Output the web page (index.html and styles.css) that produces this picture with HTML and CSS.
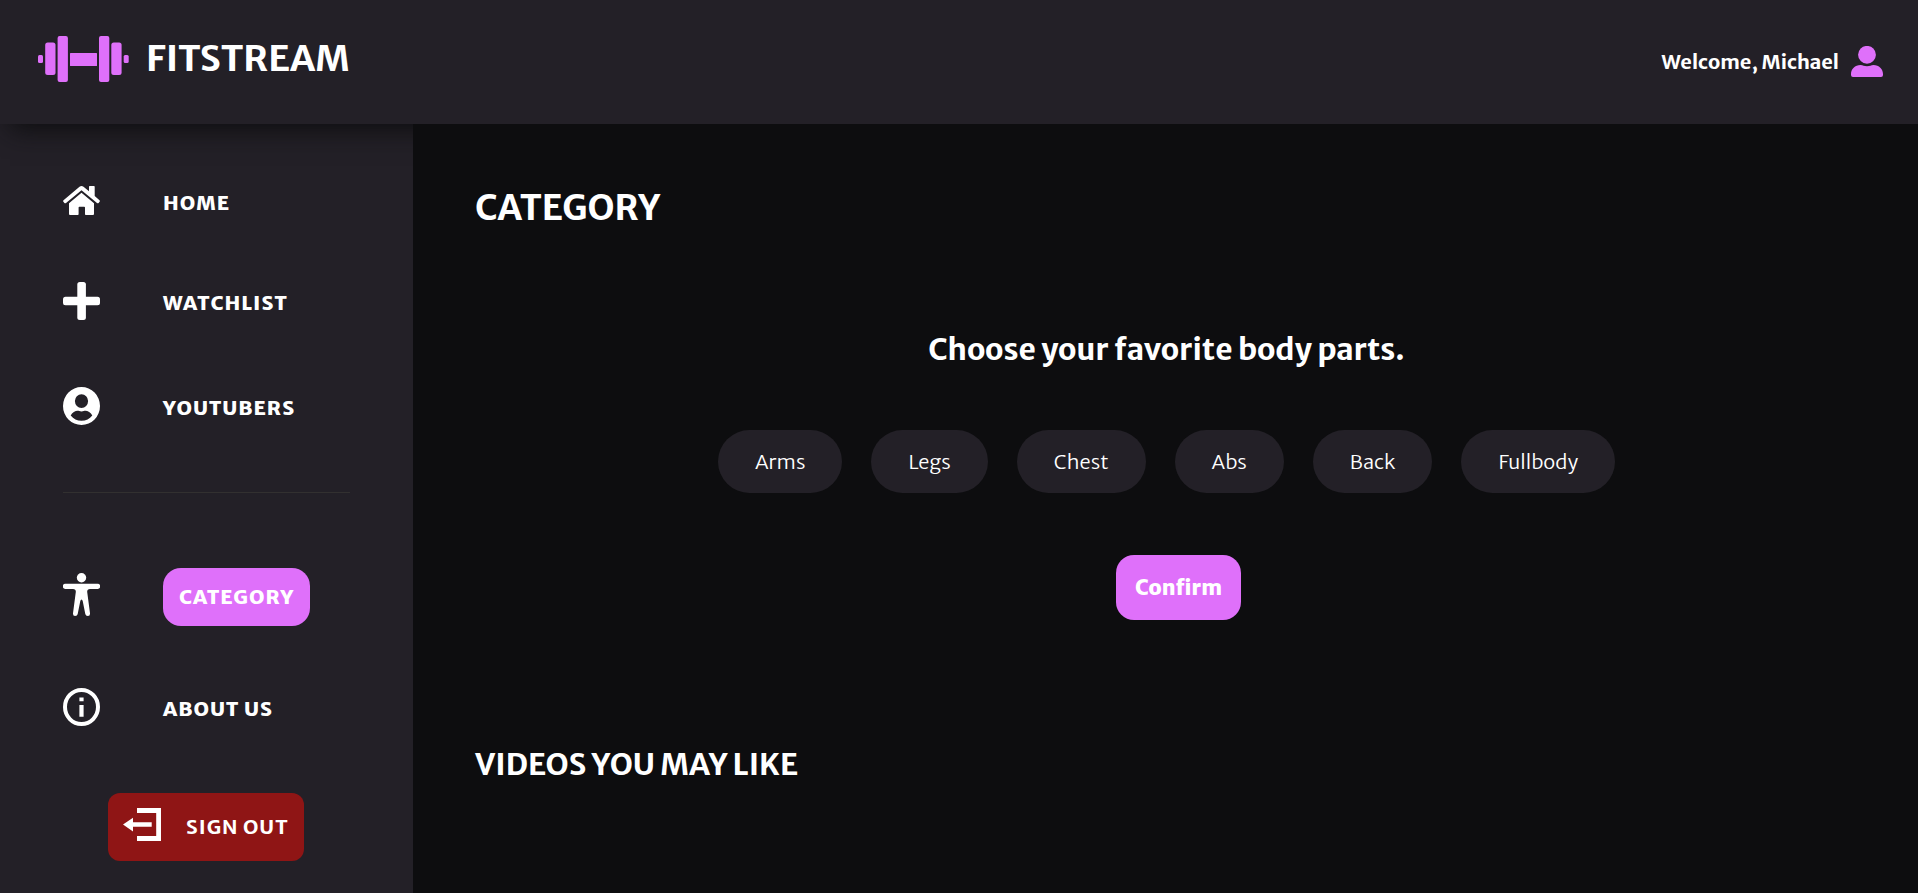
FILE: index.html
```html
<!DOCTYPE html>
<html lang="en">
<head>
<meta charset="utf-8">
<meta name="viewport" content="width=device-width, initial-scale=1">
<title>Fitstream</title>
<link rel="stylesheet" href="styles.css">
</head>
<body>
<header class="header">
  <a class="brand" href="#">
    <svg class="brand-icon" width="91" height="46" viewBox="0 0 91 46" aria-hidden="true">
      <rect x="0" y="19" width="5" height="8" rx="1.5"/>
      <rect x="7.2" y="6.5" width="10.3" height="32.5" rx="2.5"/>
      <rect x="19.6" y="0" width="10.3" height="46" rx="2"/>
      <rect x="32" y="17" width="27" height="13" rx=".5"/>
      <rect x="61" y="0" width="10.3" height="46" rx="2"/>
      <rect x="73.3" y="6.5" width="10.3" height="32.5" rx="2.5"/>
      <rect x="85.7" y="19" width="5" height="8" rx="1.5"/>
    </svg>
    <span class="brand-name">FITSTREAM</span>
  </a>
  <div class="welcome">
    <span>Welcome, Michael</span>
    <svg class="user-icon" width="32" height="31" viewBox="0 0 32 31" aria-hidden="true">
      <circle cx="16" cy="8.8" r="8.9"/>
      <path d="M9.5 19C12 19 13 20.3 16 20.3S20 19 22.500 19C28 19 32 23 32 28V29Q32 31 30 31H2Q0 31 0 29V28C0 23 4 19 9.500 19Z"/>
    </svg>
  </div>
</header>
<div class="layout">
  <nav class="sidebar" aria-label="Main">
    <ul class="menu">
      <li><a class="menu-link" href="#">
        <svg width="37" height="29" viewBox="0 0 37 29" aria-hidden="true">
          <path d="M.5 14.200 16.500.700Q18.500-.700 20.500.700L26 5.300V.700Q26 0 26.700 0H31Q31.700 0 31.700.700V10L36.500 14.200Q37.300 15 36.600 15.800L35.600 17Q34.800 17.700 34 17L18.500 4.200 3 17Q2.200 17.700 1.400 17L.4 15.800Q-.3 15 .5 14.200Z"/>
          <path d="M18.500 6.800 31 17.200V28Q31 29 30 29H22.800Q22 29 22 28.200V21.500Q22 20.700 21.200 20.700H16.400Q15.600 20.700 15.600 21.500V28.200Q15.600 29 14.800 29H7Q6 29 6 28V17.200Z"/>
        </svg>
        <span class="label">HOME</span></a></li>
      <li><a class="menu-link" href="#">
        <svg width="37" height="38" viewBox="0 0 37 38" aria-hidden="true">
          <rect x="14.300" y="0" width="8.600" height="38" rx="2.500"/>
          <rect x="0" y="14.800" width="37" height="8.400" rx="2.500"/>
        </svg>
        <span class="label">WATCHLIST</span></a></li>
      <li><a class="menu-link" href="#">
        <svg width="37" height="38" viewBox="0 0 37 38" aria-hidden="true">
          <path fill-rule="evenodd" d="M18.500 0A18.500 19 0 0 1 18.500 38A18.500 19 0 0 1 18.500 0ZM18.500 7.300A6.600 6.800 0 0 0 18.500 20.900A6.600 6.800 0 0 0 18.500 7.300ZM7.700 28.500C10.500 32 14 33.700 18.500 33.700S26.500 32 29.300 28.500C28 25.500 24.500 23.700 22.500 23.700C21 23.700 20.500 24.400 18.500 24.400S16 23.700 14.500 23.700C12.500 23.700 9 25.500 7.700 28.500Z"/>
        </svg>
        <span class="label">YOUTUBERS</span></a></li>
    </ul>
    <hr class="divider">
    <ul class="menu menu-secondary">
      <li><a class="menu-link" href="#" aria-current="page">
        <svg class="raised" width="37" height="43" viewBox="0 0 37 43" aria-hidden="true">
          <circle cx="18.500" cy="4.700" r="4.700"/>
          <path d="M2.400 10.800H34.600A2.500 2.500 0 0 1 34.600 15.900H27Q24 15.900 24.200 19L27 40.300Q27.200 43 24.900 43T22.300 41L19.700 28Q19.300 26.500 18.500 26.500T17.300 28L14.700 41Q14.400 43 12.100 43T10 40.300L12.800 19Q13 15.900 10 15.900H2.400A2.500 2.500 0 0 1 2.400 10.800Z"/>
        </svg>
        <span class="pill">CATEGORY</span></a></li>
      <li><a class="menu-link" href="#">
        <svg width="37" height="38" viewBox="0 0 37 38" aria-hidden="true">
          <ellipse class="ring" cx="18.500" cy="19" rx="16.500" ry="17"/>
          <path d="M16.400 9.500H20.600V13.300H16.400ZM16.400 17H20.600V28.700H16.400Z"/>
        </svg>
        <span class="label">ABOUT US</span></a></li>
    </ul>
    <button class="sign-out" type="button">
      <svg class="raised" width="38" height="33" viewBox="0 0 38 33" aria-hidden="true">
        <path d="M14 0H38V33H14V28H33.200V5H14ZM0 16.600 10 9.700V14.300H28.700V18.800H10V23.500Z"/>
      </svg>
      <span>SIGN OUT</span>
    </button>
  </nav>
  <main class="content">
    <h1 class="title">CATEGORY</h1>
    <section class="chooser">
      <h2 class="prompt">Choose your favorite body parts.</h2>
      <div class="options">
        <button class="option" type="button">Arms</button>
        <button class="option" type="button">Legs</button>
        <button class="option" type="button">Chest</button>
        <button class="option" type="button">Abs</button>
        <button class="option" type="button">Back</button>
        <button class="option" type="button">Fullbody</button>
      </div>
      <button class="confirm" type="button">Confirm</button>
    </section>
    <h2 class="subtitle">VIDEOS YOU MAY LIKE</h2>
  </main>
</div>
</body>
</html>
```
FILE: styles.css
```css
* {
  box-sizing: border-box;
}

body {
  margin: 0;
  min-height: 100vh;
  display: flex;
  flex-direction: column;
  background: #0d0d0f;
  color: #fff;
  font-family: "Merriweather Sans", Lato, "Open Sans", sans-serif;
  font-size: 20px;
  line-height: 24px;
}

a {
  color: inherit;
  text-decoration: none;
}

button {
  border: 0;
  color: inherit;
  font: inherit;
  cursor: pointer;
}

svg {
  flex: none;
  fill: currentColor;
}

h1,
h2 {
  margin: 0;
}

.header {
  position: relative;
  z-index: 1;
  display: flex;
  justify-content: space-between;
  padding: 34px 35px 40px 38px;
  background: #232027;
  box-shadow: 10px 5px 25px #0d0d0f;
}

.brand {
  display: flex;
  align-items: center;
  gap: 17px;
  height: 50px;
}

.brand-icon,
.user-icon {
  color: #df70fa;
}

.brand-name {
  font-size: 36px;
  line-height: 50px;
  font-weight: 700;
}

.welcome {
  display: flex;
  align-items: center;
  gap: 12px;
  padding-top: 5px;
  font-weight: 600;
}

.layout {
  flex: 1;
  display: flex;
}

.sidebar {
  flex: none;
  width: 413px;
  padding: 62px 63px 32px;
  background: #232027;
}

.menu {
  display: flex;
  flex-direction: column;
  gap: 67px;
  margin: 0;
  padding: 0;
  list-style: none;
}

.menu-secondary {
  gap: 62px;
}

.menu-link {
  display: flex;
  align-items: center;
  gap: 63px;
  font-weight: 800;
  letter-spacing: 1px;
}

.label {
  padding-top: 4px;
}

.raised {
  margin-bottom: 5px;
}

.pill {
  padding: 17px 16px;
  border-radius: 18px;
  background: #df70fa;
}

.divider {
  height: 1px;
  margin: 67px 0 75px;
  border: 0;
  background: #323030;
}

.ring {
  fill: none;
  stroke: currentColor;
  stroke-width: 4;
}

.sign-out {
  display: flex;
  align-items: center;
  gap: 25px;
  height: 68px;
  margin: 67px 0 0 45px;
  padding: 0 15px;
  border-radius: 12px;
  background: #8f1515;
  font-weight: 700;
  letter-spacing: 1px;
}

.content {
  position: relative;
  z-index: 2;
  flex: 1;
  padding: 59px 60px 59px 62px;
  background: #0d0d0f;
}

.title {
  font-size: 35px;
  line-height: 50px;
}

.chooser {
  display: flex;
  flex-direction: column;
  align-items: center;
  padding: 96px 0 124px;
}

.prompt {
  font-size: 30px;
  font-weight: 600;
  line-height: 40px;
}

.options {
  display: flex;
  flex-wrap: wrap;
  justify-content: center;
  gap: 29px;
  margin: 61px 0 62px;
}

.option {
  height: 63px;
  padding: 0 37px;
  border-radius: 32px;
  background: #232027;
  font-weight: 300;
}

.confirm {
  height: 65px;
  margin-left: 24px;
  padding: 0 19px;
  border-radius: 18px;
  background: #df70fa;
  font-size: 21px;
  font-weight: 900;
}

.subtitle {
  font-size: 30px;
  font-weight: 600;
  line-height: 40px;
}
```
